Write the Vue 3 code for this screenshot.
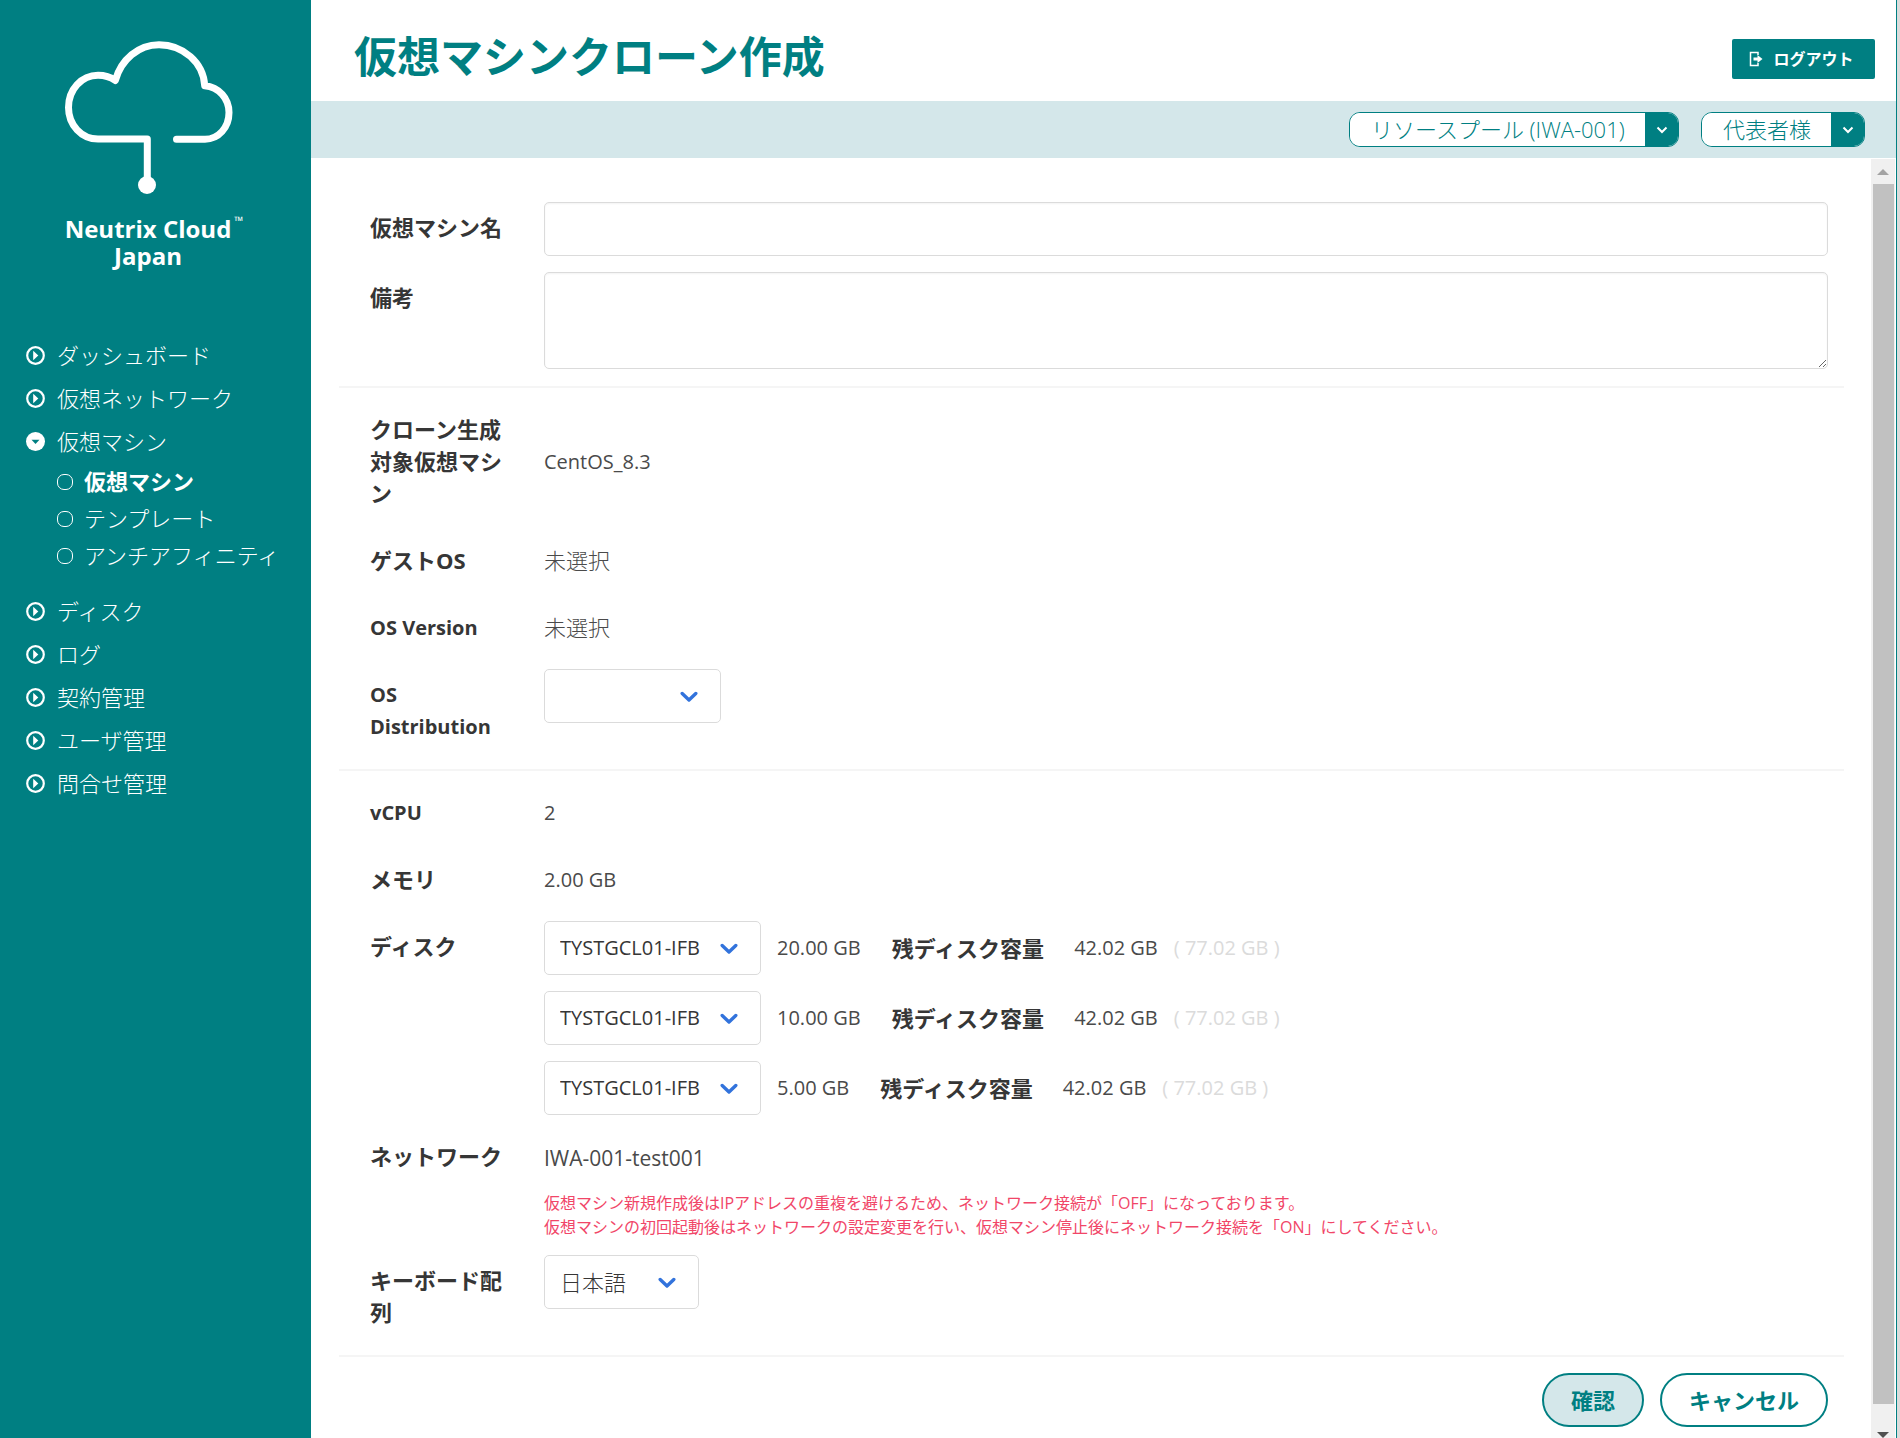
<template>
  <div class="app-shell">
    <!-- Sidebar -->
    <aside class="sidebar">
      <div class="brand">
        <svg class="brand-logo" viewBox="60 36 180 164" fill="none" xmlns="http://www.w3.org/2000/svg">
          <path
            d="M147.3 180V139H98C81.5 139 68.5 125 68.5 107.5C68.5 89.5 81.5 75.2 98 75.2C104 75.2 110.500 77 115.300 80.500C121 59.500 138.500 44.700 159 44.700C183 44.700 203.500 62.500 204.700 85.700C219 87 229 98.500 229 112.500C229 127.500 218.500 139.200 205 139.200H176.500"
            stroke="currentColor" stroke-width="7" stroke-linecap="round" stroke-linejoin="round"
          />
          <circle cx="147" cy="185" r="9" fill="currentColor" />
        </svg>
        <p class="brand-name">Neutrix Cloud<span class="brand-tm">™</span><br>Japan</p>
      </div>

      <nav class="menu">
        <div v-for="item in menu" :key="item.label">
          <a href="#" class="menu-item">
            <svg class="menu-icon" viewBox="0 0 19 19" xmlns="http://www.w3.org/2000/svg">
              <template v-if="item.children">
                <circle cx="9.5" cy="9.5" r="9.5" fill="#ffffff" />
                <path d="M5.500 7.800H13.500L9.500 12Z" fill="#007f82" />
              </template>
              <template v-else>
                <circle cx="9.5" cy="9.5" r="8.3" fill="none" stroke="#ffffff" stroke-width="2.2" />
                <path d="M7.200 4.800V14.200L12.300 9.500Z" fill="#ffffff" />
              </template>
            </svg>
            <span class="menu-text">{{ item.label }}</span>
          </a>
          <div v-if="item.children" class="submenu">
            <a
              v-for="child in item.children"
              :key="child"
              href="#"
              class="submenu-item"
              :class="{ active: child === activeChild }"
            >
              <span class="submenu-mark"></span>
              <span class="menu-text">{{ child }}</span>
            </a>
          </div>
        </div>
      </nav>
    </aside>

    <!-- Page -->
    <div class="page">
      <header class="page-header">
        <h1 class="page-title">仮想マシンクローン作成</h1>
        <button type="button" class="logout-btn">
          <svg width="14" height="16" viewBox="0 0 14 16" fill="none" xmlns="http://www.w3.org/2000/svg">
            <path d="M9 4V1.500H1.500V14.500H9V12" stroke="currentColor" stroke-width="1.500" />
            <path d="M4.500 6.500H8.500V4L13.500 8L8.500 12V9.500H4.500Z" fill="currentColor" />
          </svg>
          ログアウト
        </button>
      </header>

      <div class="toolbar">
        <div v-for="box in switchers" :key="box.name" class="pill">
          <select class="pill-select" :aria-label="box.name">
            <option>{{ box.value }}</option>
          </select>
          <span class="pill-cap">
            <svg width="12" height="8" viewBox="0 0 12 8" fill="none" xmlns="http://www.w3.org/2000/svg">
              <path d="M1.500 1.500L6 6L10.500 1.500" stroke="currentColor" stroke-width="2" />
            </svg>
          </span>
        </div>
      </div>

      <div class="page-body">
        <form class="clone-form" @submit.prevent>
          <section class="group">
            <div class="row">
              <label class="label" for="vm-name">仮想マシン名</label>
              <input id="vm-name" v-model="form.name" type="text" class="input">
            </div>
            <div class="row">
              <label class="label" for="vm-note">備考</label>
              <textarea id="vm-note" v-model="form.note" class="input textarea"></textarea>
            </div>
          </section>

          <section class="group">
            <div class="row">
              <span class="label">クローン生成対象仮想マシン</span>
              <span class="value latin">CentOS_8.3</span>
            </div>
            <div class="row">
              <span class="label">ゲストOS</span>
              <span class="value">未選択</span>
            </div>
            <div class="row">
              <span class="label latin">OS Version</span>
              <span class="value">未選択</span>
            </div>
            <div class="row">
              <label class="label latin" for="os-dist">OS Distribution</label>
              <div class="select select-dist">
                <select id="os-dist" v-model="form.distribution">
                  <option value=""></option>
                </select>
                <ChevronIcon />
              </div>
            </div>
          </section>

          <section class="group">
            <div class="row">
              <span class="label latin">vCPU</span>
              <span class="value latin">2</span>
            </div>
            <div class="row">
              <span class="label">メモリ</span>
              <span class="value latin">2.00 GB</span>
            </div>
            <div class="row">
              <span class="label">ディスク</span>
              <div class="disks">
                <div v-for="(disk, i) in disks" :key="i" class="disk">
                  <div class="select select-disk">
                    <select v-model="disk.storage" :aria-label="`ディスク ${i + 1}`">
                      <option>TYSTGCL01-IFB</option>
                    </select>
                    <ChevronIcon />
                  </div>
                  <span class="disk-size latin">{{ disk.size }} GB</span>
                  <span class="disk-label">残ディスク容量</span>
                  <span class="latin">42.02 GB</span>
                  <span class="disk-total latin">( 77.02 GB )</span>
                </div>
              </div>
            </div>
            <div class="row">
              <span class="label">ネットワーク</span>
              <div class="network">
                <p class="network-name">IWA-001-test001</p>
                <p class="network-note">
                  仮想マシン新規作成後はIPアドレスの重複を避けるため、ネットワーク接続が「OFF」になっております。<br>
                  仮想マシンの初回起動後はネットワークの設定変更を行い、仮想マシン停止後にネットワーク接続を「ON」にしてください。
                </p>
              </div>
            </div>
            <div class="row">
              <label class="label" for="keyboard">キーボード配列</label>
              <div class="select select-keyboard">
                <select id="keyboard" v-model="form.keyboard" class="kana">
                  <option>日本語</option>
                </select>
                <ChevronIcon />
              </div>
            </div>
          </section>

          <div class="actions">
            <button type="submit" class="action-btn primary">確認</button>
            <button type="button" class="action-btn">キャンセル</button>
          </div>
        </form>

        <!-- Scroll rail -->
        <div class="rail" aria-hidden="true">
          <span class="rail-up"></span>
          <span class="rail-thumb"></span>
          <span class="rail-down"></span>
        </div>
      </div>
    </div>
  </div>
</template>

<script setup>
import { h, reactive } from 'vue'

defineOptions({
  name: 'VmCloneCreate'
})

// Drop-down arrow shared by the form selects
const ChevronIcon = () =>
  h('svg', { class: 'chevron', width: 18, height: 12, viewBox: '0 0 18 12', fill: 'none' }, [
    h('path', {
      d: 'M2.2 2.500L9 9L15.800 2.500',
      stroke: '#3273dc',
      'stroke-width': 3.4,
      'stroke-linecap': 'round',
      'stroke-linejoin': 'round'
    })
  ])

const activeChild = '仮想マシン'

const menu = [
  { label: 'ダッシュボード' },
  { label: '仮想ネットワーク' },
  { label: '仮想マシン', children: ['仮想マシン', 'テンプレート', 'アンチアフィニティ'] },
  { label: 'ディスク' },
  { label: 'ログ' },
  { label: '契約管理' },
  { label: 'ユーザ管理' },
  { label: '問合せ管理' }
]

const switchers = [
  { name: 'リソースプール', value: 'リソースプール (IWA-001)' },
  { name: 'ユーザ', value: '代表者様' }
]

const form = reactive({
  name: '',
  note: '',
  distribution: '',
  keyboard: '日本語'
})

const disks = reactive([
  { storage: 'TYSTGCL01-IFB', size: '20.00' },
  { storage: 'TYSTGCL01-IFB', size: '10.00' },
  { storage: 'TYSTGCL01-IFB', size: '5.00' }
])
</script>

<style>
body {
  margin: 0;
  background: #ffffff;
}
</style>

<style scoped>
.app-shell {
  display: flex;
  min-height: 100vh;
  box-sizing: border-box;
  border-right: 3px solid #dcdcdc;
  font-family: "Open Sans", "Noto Sans CJK JP", sans-serif;
  font-size: 22px;
  line-height: 32px;
  color: #4a4a4a;
}

p,
h1 {
  margin: 0;
}

input,
textarea,
select,
button {
  font: inherit;
  color: inherit;
  box-sizing: border-box;
}

.latin {
  font-size: 20px;
}

/* Sidebar */
.sidebar {
  flex: 0 0 311px;
  background: #007f82;
  color: #ffffff;
}

.brand {
  width: 180px;
  margin-left: 58px;
  padding-top: 36px;
}

.brand-logo {
  display: block;
  width: 180px;
  height: 164px;
  margin: 0 0 15px 2px;
}

.brand-name {
  font-size: 24px;
  font-weight: 700;
  line-height: 27px;
  text-align: center;
  white-space: nowrap;
}

.brand-tm {
  position: absolute;
  margin: -2px 0 0 3px;
  font-size: 12px;
  font-weight: 400;
  line-height: 16px;
}

.menu {
  padding: 65px 0 0 26px;
}

.menu-item,
.submenu-item {
  display: flex;
  align-items: center;
  color: #ffffff;
  font-weight: 300;
  text-decoration: none;
}

.menu-item {
  gap: 12px;
  height: 43px;
}

.menu-icon {
  width: 19px;
  height: 19px;
}

.menu-text {
  padding-bottom: 2px;
}

.submenu {
  padding: 0 0 16px 31px;
}

.submenu-item {
  gap: 11px;
  height: 37px;
}

.submenu-item.active {
  font-weight: 700;
}

.submenu-mark {
  width: 14px;
  height: 14px;
  border: 1px solid #ffffff;
  border-radius: 7px;
}

/* Header */
.page {
  display: flex;
  flex: 1;
  flex-direction: column;
  min-width: 0;
  border-right: 1px solid #007f82;
}

.page-header {
  display: flex;
  align-items: center;
  justify-content: space-between;
  height: 101px;
  padding: 16px 21px 0 43px;
  box-sizing: border-box;
}

.page-title {
  padding-bottom: 4px;
  color: #007f82;
  font-size: 43px;
  font-weight: 700;
  line-height: 56px;
}

.logout-btn {
  display: flex;
  align-items: center;
  justify-content: center;
  gap: 10px;
  width: 143px;
  height: 40px;
  padding: 0 4px 0 0;
  border: none;
  border-radius: 2px;
  background: #007f82;
  color: #ffffff;
  font-size: 16px;
  font-weight: 700;
  cursor: pointer;
}

.toolbar {
  display: flex;
  align-items: center;
  justify-content: flex-end;
  gap: 22px;
  height: 57px;
  padding-right: 31px;
  background: #d4e7ea;
}

.pill {
  display: flex;
  height: 35px;
  box-sizing: border-box;
  overflow: hidden;
  border: 1px solid #007f82;
  border-radius: 11px;
  background: #ffffff;
  color: #007f82;
}

.pill-select {
  height: 33px;
  padding: 0 19px 2px 21px;
  border: none;
  background: #ffffff;
  font-weight: 300;
  appearance: none;
}

.pill-cap {
  display: flex;
  align-items: center;
  justify-content: center;
  width: 33px;
  background: #007f82;
  color: #ffffff;
}

/* Form */
.page-body {
  display: flex;
  flex: 1;
}

.clone-form {
  flex: 1;
  min-width: 0;
  padding: 44px 27px 10px 28px;
}

.group {
  display: flex;
  flex-direction: column;
  gap: 16px;
  margin-bottom: 16px;
  padding: 0 16px 17px 31px;
  border-bottom: 2px solid #f5f5f5;
}

.row {
  display: flex;
  align-items: flex-start;
  gap: 32px;
}

.label {
  flex: 0 0 142px;
  padding: 9px 0 10px;
  color: #363636;
  font-weight: 700;
}

.label.latin {
  padding: 10px 0 9px;
}

.value {
  align-self: center;
  padding-bottom: 2px;
  font-weight: 300;
}

.value.latin {
  padding-bottom: 0;
  font-weight: 400;
}

.input {
  flex: 1;
  min-width: 0;
  height: 54px;
  padding: 10px 16px;
  border: 1px solid #dbdbdb;
  border-radius: 5px;
  background: #ffffff;
  box-shadow: inset 0 1px 2px rgba(10, 10, 10, 0.05);
}

.textarea {
  height: 97px;
  resize: vertical;
}

.select {
  position: relative;
}

.select select {
  display: block;
  width: 100%;
  height: 54px;
  padding: 0 48px 0 15px;
  border: 1px solid #dbdbdb;
  border-radius: 5px;
  background: #ffffff;
  color: #363636;
  font-size: 20px;
  appearance: none;
}

.select select.kana {
  font-size: 22px;
  font-weight: 300;
}

.select :deep(.chevron) {
  position: absolute;
  top: 22px;
  right: 23px;
  pointer-events: none;
}

.select-dist {
  width: 177px;
}

.select-disk {
  width: 217px;
}

.select-keyboard {
  width: 155px;
}

.disks {
  display: flex;
  flex-direction: column;
  gap: 16px;
}

.disk {
  display: flex;
  align-items: center;
}

.disk-size {
  margin-left: 16px;
}

.disk-label {
  margin: 0 30px 0 31px;
  color: #363636;
  font-weight: 700;
}

.disk-total {
  margin-left: 16px;
  color: #dbdbdb;
}

.network-name {
  font-size: 21px;
  line-height: 54px;
}

.network-note {
  margin-top: 6px;
  color: #f14668;
  font-size: 16px;
  line-height: 24px;
}

.actions {
  display: flex;
  justify-content: flex-end;
  gap: 16px;
  padding-right: 16px;
}

.action-btn {
  height: 54px;
  padding: 0 27px;
  border: 2px solid #007f82;
  border-radius: 27px;
  background: #ffffff;
  color: #007f82;
  font-weight: 700;
  cursor: pointer;
}

.action-btn.primary {
  background: #d4e7ea;
}

/* Scroll rail */
.rail {
  display: flex;
  flex-direction: column;
  align-items: center;
  width: 24px;
  margin: 1px 1px 0 0;
  padding-top: 10px;
  box-sizing: border-box;
  background: #f0f0f0;
}

.rail-up,
.rail-down {
  width: 0;
  height: 0;
  border: 6px solid transparent;
}

.rail-up {
  margin-bottom: 9px;
  border-top-width: 0;
  border-bottom-color: #a3a3a3;
}

.rail-thumb {
  flex: 1;
  width: 21px;
  background: #c1c1c1;
}

.rail-down {
  margin-top: 28px;
  border-bottom-width: 0;
  border-top-color: #505050;
}
</style>
